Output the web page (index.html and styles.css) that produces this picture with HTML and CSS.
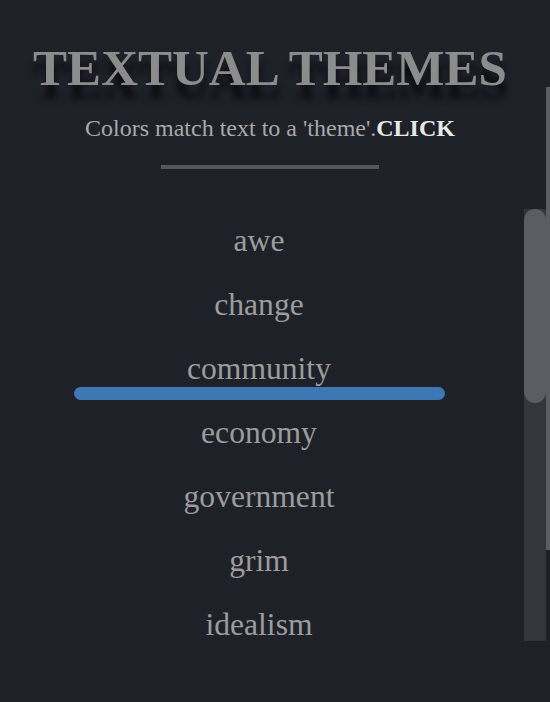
FILE: index.html
```html
<!DOCTYPE html>
<html lang="en">
<head>
<meta charset="utf-8">
<title>Textual Themes</title>
<link rel="stylesheet" href="styles.css">
</head>
<body>
<div class="page">
  <header class="header">
    <h1 class="title">TEXTUAL THEMES</h1>
    <p class="subtitle">Colors match text to a 'theme'.<strong class="click">CLICK</strong></p>
    <div class="rule"></div>
  </header>
  <div class="list-wrap">
    <ul class="themes">
      <li class="theme">awe</li>
      <li class="theme">change</li>
      <li class="theme active">community</li>
      <li class="theme">economy</li>
      <li class="theme">government</li>
      <li class="theme">grim</li>
      <li class="theme">idealism</li>
    </ul>
    <div class="scrollbar"><div class="scroll-thumb"></div></div>
  </div>
  <div class="page-scroll"></div>
</div>
</body>
</html>
```

FILE: styles.css
```css
html, body {
  margin: 0;
  padding: 0;
  height: 100%;
  background: #1f2129;
  overflow: hidden;
}

.page {
  position: relative;
  height: 702px;
  font-family: "Liberation Serif", "Times New Roman", serif;
}

.header {
  display: flex;
  flex-direction: column;
  align-items: center;
  padding: 38px 10px 0 0;
}

.title {
  margin: 0;
  font-size: 51px;
  line-height: 60px;
  font-weight: bold;
  color: #8c8c8c;
  text-shadow: 1px 13px 6px rgba(6, 7, 10, 0.8);
}

.subtitle {
  margin: 16px 0 0;
  font-size: 24px;
  line-height: 28px;
  color: #a9a9a9;
}

.click {
  color: #e8e8e8;
}

.rule {
  margin-top: 23px;
  width: 218px;
  height: 4px;
  background: #57575a;
}

.list-wrap {
  display: flex;
  margin: 40px 4px 0 0;
  height: 432px;
}

.themes {
  flex: 1;
  list-style: none;
  margin: 0;
  padding: 0 6px 0 0;
  overflow: hidden;
}

.theme {
  position: relative;
  height: 64px;
  line-height: 64px;
  font-size: 31.6px;
  text-align: center;
  color: #9c9c9c;
}

.theme.active::after {
  content: "";
  position: absolute;
  left: 74px;
  width: 371px;
  bottom: 1px;
  height: 13px;
  border-radius: 7px;
  background: #3d78b4;
}

.scrollbar {
  width: 22px;
  background: #34363d;
}

.scroll-thumb {
  height: 194px;
  border-radius: 11px;
  background: #5b5d64;
}

.page-scroll {
  position: absolute;
  right: 0;
  top: 87px;
  width: 4px;
  height: 463px;
  background: #5d5e63;
}
```
